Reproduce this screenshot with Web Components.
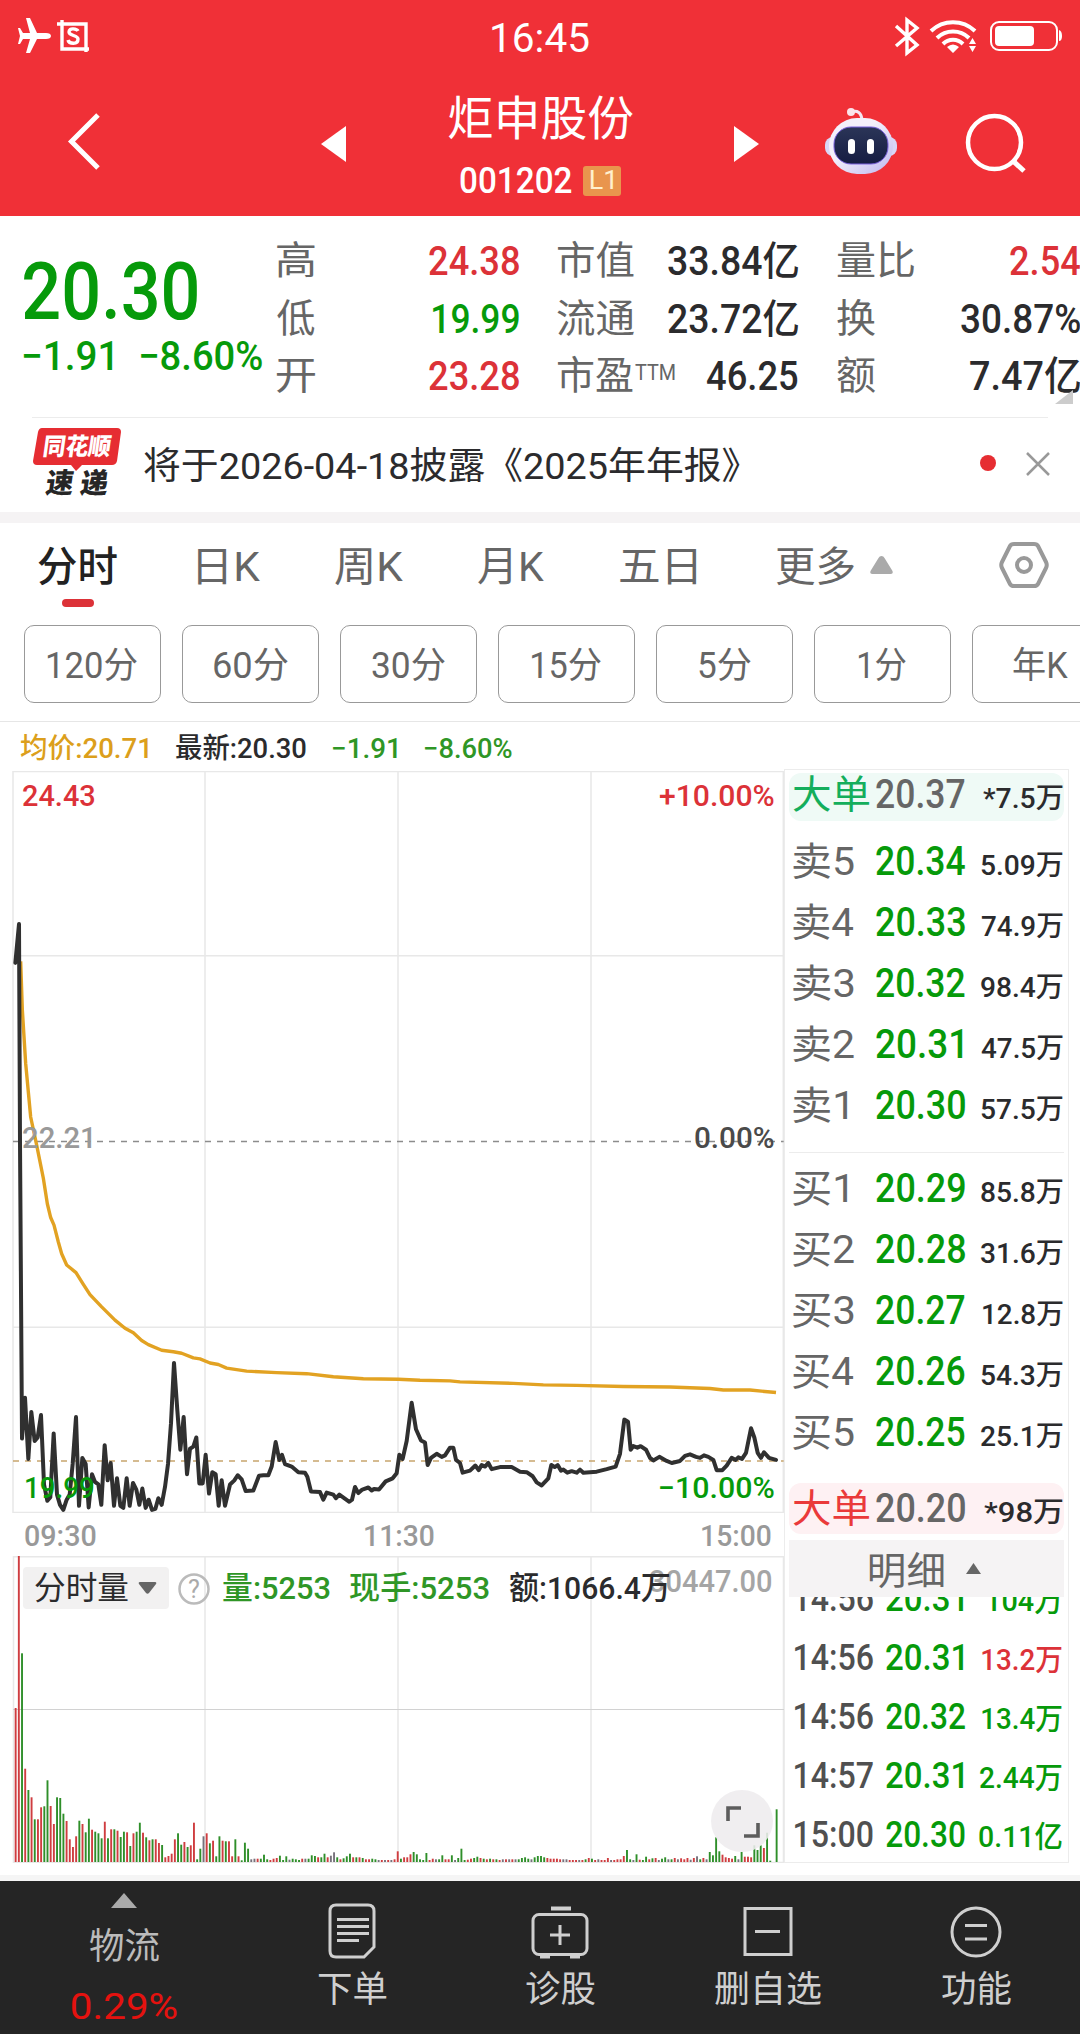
<!DOCTYPE html>
<html lang="zh-CN">
<head>
<meta charset="utf-8">
<title>炬申股份 001202</title>
<style>
  :root {
    --up: #dc3238;
    --down: #069a0a;
    --down-soft: #2f9626;
    --ink: #2b2b2d;
    --muted: #666;
    --pale: #999;
    --line: #ececec;
    --brand: #f03037;
  }
  body {
    margin: 0;
    width: 1080px;
    height: 2034px;
    overflow: hidden;
    background: #fff;
    color: var(--ink);
    font-family: Roboto, "Noto Sans CJK SC", sans-serif;
    display: flex;
    flex-direction: column;
  }
  .band { height: 11px; background: #f5f3f4; flex: none; }
  main { display: flex; height: 1094px; flex: none; }
  .charts { width: 784px; display: flex; flex-direction: column; padding-top: 2px; }
</style>
</head>
<body>
<status-bar></status-bar>
<stock-header></stock-header>
<quote-panel></quote-panel>
<notice-bar><fit-text w="596">将于2026-04-18披露《2025年年报》</fit-text></notice-bar>
<div class="band"></div>
<chart-tabs></chart-tabs>
<period-bar></period-bar>
<chart-legend></chart-legend>
<main>
  <div class="charts">
    <price-chart></price-chart>
    <volume-chart></volume-chart>
  </div>
  <order-book><trade-list></trade-list></order-book>
</main>
<bottom-nav></bottom-nav>

<script>
class BaseElement extends HTMLElement {
  constructor() {
    super();
    this.attachShadow({ mode: 'open' });
  }

  connectedCallback() {
    this.shadowRoot.innerHTML = this.render();
  }
}

// Text whose drawn glyphs span exactly `w` pixels
const ruler = document.createElement('canvas').getContext('2d');

class FitText extends HTMLElement {
  constructor() {
    super();
    this.attachShadow({ mode: 'open' });
    this.shadowRoot.innerHTML = `
      <style>
        :host { display: inline-block; white-space: nowrap; flex: none; }
        span { display: inline-block; transform-origin: 0 50%; }
      </style>
      <span><slot></slot></span>
    `;
  }

  connectedCallback() {
    const width = Number(this.getAttribute('w'));
    const cs = getComputedStyle(this);
    ruler.font = `${cs.fontWeight} ${cs.fontSize} ${cs.fontFamily}`;
    const m = ruler.measureText(this.textContent);
    const scale = width / (m.actualBoundingBoxLeft + m.actualBoundingBoxRight);
    this.style.width = `${width}px`;
    this.shadowRoot.querySelector('span').style.transform =
      `scaleX(${scale.toFixed(4)}) translateX(${m.actualBoundingBoxLeft.toFixed(2)}px)`;
  }
}

class StatusBar extends BaseElement {
  render() {
    return `
      <style>
        :host { display: flex; justify-content: space-between; height: 74px; flex: none;
          background: var(--brand); color: #fff; font-size: 41px; line-height: 76px; }
        svg { display: block; }
        .side { width: 200px; }
      </style>
      <svg class="side" height="74" viewBox="0 0 200 74" fill="none" stroke="#fff">
        <path d="M51 36c0-2-2-3-5-3H37L30 18h-4l4 15h-7l-3-5h-2l2 8-2 8h2l3-5h7l-4 14h4l7-14h9c3 0 5-1 5-3z" fill="#fff" stroke="none"/>
        <path d="M57 24h29v28M62 20v29h27" stroke-width="3.400"/>
        <path d="M78 31c-1-2-9-4-9 1 0 4 9 3 9 7 0 6-9 5-10 1" stroke-width="3.400"/>
      </svg>
      <fit-text w="97">16:45</fit-text>
      <svg class="side" height="74" viewBox="880 0 200 74" fill="none" stroke="#fff">
        <path d="M896 26l21 19-10 8V20l10 8-21 18" stroke-width="3.400"/>
        <path d="M931 31a32 32 0 0 1 44 0M937 38a23 23 0 0 1 32 0M943 44a14 14 0 0 1 20 0" stroke-width="4"/>
        <path d="M947 47q6-5 12 0l-6 6zM969 44l3.500-6 3.500 6zM969 46h7l-3.500 6z" fill="#fff" stroke="none"/>
        <rect x="991" y="22" width="66" height="28" rx="8" stroke-width="2"/>
        <rect x="995" y="26" width="39" height="20" rx="4" fill="#fff" stroke="none"/>
        <path d="M1059 30q3 1 3 6t-3 5z" fill="#fff" stroke="none"/>
      </svg>
    `;
  }
}

class StockHeader extends BaseElement {
  render() {
    return `
      <style>
        :host { display: grid; grid-template-columns: 360px 360px 360px; height: 142px; flex: none;
          background: var(--brand); color: #fff; }
        svg { display: block; }
        .title { display: flex; flex-direction: column; align-items: center; padding-top: 15px; }
        .name { font-size: 47px; line-height: 60px; }
        .code { display: flex; align-items: center; margin-top: 13px; gap: 11px; font-size: 36px;
          font-weight: 500; line-height: 38px; }
        .badge { width: 38px; height: 30px; border-radius: 3px; background: #e9954d; color: #fff0cd;
          font-size: 25px; font-weight: 400; line-height: 30px; display: flex; justify-content: center; }
      </style>
      <svg width="360" height="142" viewBox="0 74 360 142">
        <path d="M98 115L71.500 141.500 98 168" fill="none" stroke="#fff" stroke-width="5"/>
        <path d="M346 126v36l-25-18z" fill="#fff"/>
      </svg>
      <div class="title">
        <fit-text class="name" w="185">炬申股份</fit-text>
        <div class="code"><fit-text w="112">001202</fit-text><span class="badge"><fit-text w="22">L1</fit-text></span></div>
      </div>
      <svg width="360" height="142" viewBox="720 74 360 142">
        <defs>
          <linearGradient id="shell" x1="0" y1="0" x2="1" y2="1">
            <stop offset=".4" stop-color="#f4f0fb"/><stop offset="1" stop-color="#bdb7ee"/>
          </linearGradient>
          <linearGradient id="visor" x1="0" y1="0" x2="0" y2="1">
            <stop offset="0" stop-color="#2b3558"/><stop offset="1" stop-color="#161d42"/>
          </linearGradient>
        </defs>
        <path d="M734 126v36l25-18z" fill="#fff"/>
        <path d="M851 112q10-3 11 8" fill="none" stroke="#f4e6f2" stroke-width="3"/>
        <circle cx="851" cy="112" r="4" fill="#fbe3ea"/>
        <rect x="825" y="137" width="72" height="19" rx="8" fill="#d9d6f6"/>
        <rect x="829" y="118" width="64" height="56" rx="28" fill="url(#shell)"/>
        <rect x="834" y="127" width="54" height="37" rx="17" fill="url(#visor)" stroke="#7b62de" stroke-width="1"/>
        <rect x="848" y="139" width="7" height="15" rx="3.500" fill="#fff"/>
        <rect x="867" y="139" width="7" height="15" rx="3.500" fill="#fff"/>
        <circle cx="994.500" cy="142.500" r="26.500" fill="none" stroke="#fff" stroke-width="4.500"/>
        <path d="M1013 161l11 10" stroke="#fff" stroke-width="5"/>
      </svg>
    `;
  }
}

class QuotePanel extends BaseElement {
  render() {
    const columns = [
      [['高', 38, '24.38', 90, 'up'], ['低', 38, '19.99', 86, 'down'], ['开', 38, '23.28', 90, 'up']],
      [['市值', 77, '33.84亿', 130], ['流通', 77, '23.72亿', 130], ['市盈', 76, '46.25', 91, '', 'TTM']],
      [['量比', 77, '2.54', 70, 'up'], ['换', 38, '30.87%', 119], ['额', 38, '7.47亿', 110]],
    ];
    return `
      <style>
        :host { display: block; height: 201px; flex: none; position: relative; font-size: 39px; }
        .body { display: grid; grid-template-columns: 238px 242px 241px 243px; column-gap: 38.500px; padding-top: 17px; }
        .now { padding: 17px 0 0 24px; color: var(--down); font-weight: 500; }
        .price { display: block; font-size: 79px; line-height: 84px; }
        .change { display: flex; gap: 29px; font-size: 40px; line-height: 46px; }
        .row { display: flex; height: 57.500px; line-height: 57.500px; color: var(--muted); }
        .row b { margin-left: auto; font-weight: 500; color: var(--ink); font-size: 40px; }
        .row b.up { color: var(--up); }
        .row b.down { color: var(--down); }
        sup { font-size: 22px; line-height: 50px; margin-left: 2px; vertical-align: top; height: 50px; }
        .corner { position: absolute; right: 7px; bottom: 13px; border: solid transparent;
          border-width: 0 0 14px 18px; border-bottom-color: #ccc; }
        hr { position: absolute; left: 32px; right: 32px; bottom: -1px; margin: 0; border: 0;
          height: 1px; background: var(--line); }
      </style>
      <div class="body">
        <div class="now">
          <fit-text class="price" w="173">20.30</fit-text>
          <div class="change"><fit-text w="88">−1.91</fit-text><fit-text w="121">−8.60%</fit-text></div>
        </div>
        ${columns.map(rows => `<div>${rows.map(([label, lw, value, vw, tone = '', sup]) => `
          <div class="row"><fit-text w="${lw}">${label}</fit-text>${sup ? `<sup><fit-text w="40">${sup}</fit-text></sup>` : ''}
          <b class="${tone}"><fit-text w="${vw}">${value}</fit-text></b></div>`).join('')}</div>`).join('')}
      </div>
      <i class="corner"></i>
      <hr>
    `;
  }
}

class NoticeBar extends BaseElement {
  render() {
    return `
      <style>
        :host { display: flex; height: 95px; flex: none; font-size: 37px; line-height: 99px; }
        .logo { width: 88px; margin: 11px 23px 0 33px; height: 76px; position: relative; }
        .logo svg { position: absolute; left: 0; top: 0; }
        .logo div { position: relative; font-weight: 900; transform: skewX(-8deg); display: flex; justify-content: center; }
        .brand { color: #fff; font-size: 24px; line-height: 39px; }
        .sub { color: #262626; font-size: 28px; line-height: 34px; }
        .icons { margin-left: auto; }
      </style>
      <div class="logo">
        <svg width="88" height="44" viewBox="0 0 88 44"><path d="M9 0h75q4 0 4 4l-4 29q-1 4-5 4H49l-6 6-5-6H4q-4 0-4-4L5 4q1-4 4-4z" fill="#e62d32"/></svg>
        <div class="brand"><fit-text w="67">同花顺</fit-text></div>
        <div class="sub"><fit-text w="62">速 递</fit-text></div>
      </div>
      <slot></slot>
      <svg class="icons" width="110" height="94" viewBox="970 418 110 94">
        <circle cx="988" cy="464" r="8" fill="#e62d32"/>
        <path d="M1027 454l22 22M1049 454l-22 22" stroke="#999" stroke-width="2.500"/>
      </svg>
    `;
  }
}

class ChartTabs extends BaseElement {
  render() {
    const tabs = [['日K', 62, 81], ['周K', 68, 75], ['月K', 66, 75], ['五日', 77, 76], ['更多', 78, 79]];
    return `
      <style>
        :host { display: flex; height: 102px; flex: none; box-sizing: border-box; padding-left: 38px;
          font-size: 41px; line-height: 88px; color: var(--muted); }
        .active { color: #222; font-weight: 500; position: relative; }
        .active::after { content: ''; position: absolute; left: 24px; top: 76px; width: 32px; height: 8px;
          border-radius: 4px; background: var(--up); }
      </style>
      <div class="active"><fit-text w="79">分时</fit-text></div>
      ${tabs.map(([t, w, gap]) => `<fit-text w="${w}" style="margin-left:${gap}px">${t}</fit-text>`).join('')}
      <svg width="226" height="102" viewBox="854 523 226 102">
        <path d="M881.500 556q2 0 3 2l8 13q1 3-2 3h-18q-3 0-2-3l8-13q1-2 3-2z" fill="#aaa"/>
        <path d="M1014 544h20q3 0 4 2l8 16q1.500 3 0 6l-8 16q-1 2-4 2h-20q-3 0-4-2l-8-16q-1.500-3 0-6l8-16q1-2 4-2z" fill="none" stroke="#999" stroke-width="4"/>
        <circle cx="1024" cy="565" r="7" fill="none" stroke="#999" stroke-width="4"/>
      </svg>
    `;
  }
}

class PeriodBar extends BaseElement {
  render() {
    const periods = [['120分', 89], ['60分', 74], ['30分', 73], ['15分', 69], ['5分', 52], ['1分', 47], ['年K', 55]];
    return `
      <style>
        :host { display: flex; gap: 21px; height: 97px; flex: none; box-sizing: border-box; padding-left: 24px;
          overflow: hidden; border-bottom: 1px solid #e6e6e6; font-size: 36px; color: var(--muted); }
        div { width: 137px; height: 78px; box-sizing: border-box; flex: none; border: 1px solid #999;
          border-radius: 10px; display: flex; justify-content: center; line-height: 80px; }
      </style>
      ${periods.map(([t, w]) => `<div><fit-text w="${w}">${t}</fit-text></div>`).join('')}
    `;
  }
}

class ChartLegend extends BaseElement {
  render() {
    return `
      <style>
        :host { display: flex; height: 47px; flex: none; padding-left: 20px; font-size: 28px;
          line-height: 53px; font-weight: 500; }
        .avg { color: #dc9f1c; }
        .last { margin: 0 27px 0 28px; }
        .chg { color: var(--down-soft); margin-right: 28px; }
      </style>
      <fit-text class="avg" w="128">均价:20.71</fit-text>
      <fit-text class="last" w="130">最新:20.30</fit-text>
      <fit-text class="chg" w="64">−1.91</fit-text>
      <fit-text class="chg" w="87">−8.60%</fit-text>
    `;
  }
}

// Minute series, x in thirds of a pixel, y in the plot's own units
const PRICE = `46,398 57,322 60,750 66,1330 75,1250 85,1370 94,1278 104,1335 113,1328 123,1284 132,1420 142,1452
  151,1445 161,1320 171,1440 180,1460 190,1470 200,1450 209,1440 218,1380 228,1288 237,1462 247,1368 257,1380
  266,1465 276,1400 285,1415 295,1420 304,1460 314,1343 323,1412 332,1378 342,1462 351,1408 361,1462 370,1466
  380,1408 389,1462 399,1417 409,1430 418,1460 427,1428 437,1466 446,1450 456,1470 466,1468 475,1447 485,1460
  495,1425 504,1380 513,1300 522,1182 532,1275 541,1352 551,1288 561,1400 570,1350 580,1346 589,1328 598,1418
  608,1418 617,1362 627,1438 637,1396 647,1400 656,1462 665,1412 675,1462 690,1420 703,1412 713,1402 725,1410
  737,1433 760,1432 777,1403 790,1402 805,1402 815,1385 827,1337 838,1372 846,1362 855,1380 875,1385 895,1396
  915,1397 922,1405 933,1434 960,1435 970,1450 980,1436 1000,1440 1008,1447 1018,1440 1048,1454 1056,1450
  1065,1425 1075,1437 1087,1430 1105,1426 1115,1432 1122,1429 1137,1430 1157,1414 1178,1408 1190,1398 1198,1362
  1208,1370 1220,1335 1235,1260 1248,1312 1263,1334 1275,1338 1283,1382 1293,1368 1310,1360 1325,1366 1335,1363
  1350,1348 1360,1348 1368,1372 1380,1378 1388,1397 1410,1393 1426,1383 1436,1392 1445,1382 1455,1385 1465,1378
  1475,1390 1500,1386 1535,1386 1560,1395 1580,1396 1598,1404 1610,1416 1625,1422 1645,1408 1654,1382 1664,1386
  1673,1382 1683,1393 1690,1391 1702,1397 1715,1394 1730,1397 1740,1391 1750,1397 1790,1395 1820,1390 1847,1385
  1860,1360 1873,1293 1884,1297 1892,1352 1900,1345 1912,1348 1922,1345 1938,1352 1950,1368 1960,1373 1978,1366
  2000,1374 2015,1378 2040,1374 2055,1364 2070,1361 2088,1366 2100,1368 2112,1363 2125,1366 2140,1372 2150,1392
  2167,1392 2180,1383 2195,1368 2207,1372 2215,1367 2226,1370 2238,1358 2253,1310 2263,1328 2273,1358 2283,1368
  2292,1357 2307,1368 2328,1372`;
const AVERAGE = `62,395 67,490 77,595 92,700 110,755 130,820 142,870 152,897 162,912 175,945 185,968 200,990 213,997
  228,1005 250,1028 270,1048 305,1072 345,1098 375,1114 400,1123 425,1138 445,1146 485,1157 520,1160 545,1163
  580,1172 600,1174 630,1182 655,1185 680,1192 740,1198 830,1201 920,1203 1000,1209 1090,1213 1195,1214
  1260,1216 1350,1217 1380,1219 1540,1222 1630,1225 1730,1226 1870,1228 2010,1229 2130,1232 2170,1235 2250,1235
  2328,1240`;

class PriceChart extends BaseElement {
  render() {
    return `
      <style>
        :host { display: block; height: 785px; position: relative; font-size: 29.500px; font-weight: 500; line-height: 30px; }
        svg { display: block; }
        .series * { vector-effect: non-scaling-stroke; }
        .axis { display: flex; justify-content: space-between; padding: 8px 13px 0 25px; color: var(--pale); line-height: 30px; }
        .tag { position: absolute; left: 23px; }
        .tag.r { left: auto; right: 10px; }
        .top { top: 10px; color: var(--up); }
        .mid { top: 352px; color: var(--pale); }
        .mid.r { color: #4a4a4a; }
        .low { top: 702px; color: var(--down); }
      </style>
      <svg class="series" width="784" height="742" viewBox="0 22 2352 1454" preserveAspectRatio="none" fill="none">
        <path d="M39 23H2351M39 384H2351M39 1112H2351M39 1475H2351M39 22V1476M615 22V1476M1194 22V1476M1773 22V1476M2350 22V1476" stroke="#e8e8e8" stroke-width="1.500"/>
        <path d="M39 748H2351" stroke="#8c8c8c" stroke-width="1.500" stroke-dasharray="6 6"/>
        <path d="M39 1374H2351" stroke="#c8a56e" stroke-width="1.500" stroke-dasharray="6 6"/>
        <polyline points="${AVERAGE}" stroke="#e2a222" stroke-width="3.400" stroke-linejoin="round"/>
        <polyline points="${PRICE}" stroke="#303030" stroke-width="4" stroke-linejoin="round" stroke-linecap="round"/>
        <path d="M43 398L55 322H60V398z" fill="#303030"/>
      </svg>
      <div class="axis"><fit-text w="71">09:30</fit-text><fit-text w="69">11:30</fit-text><fit-text w="69">15:00</fit-text></div>
      <fit-text class="tag top" w="72">24.43</fit-text>
      <fit-text class="tag top r" w="115">+10.00%</fit-text>
      <fit-text class="tag mid" w="69">22.21</fit-text>
      <fit-text class="tag mid r" w="79">0.00%</fit-text>
      <fit-text class="tag low" w="68" style="left:26px">19.99</fit-text>
      <fit-text class="tag low r" w="114">−10.00%</fit-text>
    `;
  }
}

// One bar per minute: colour letter (r rise, g fall, k flat) and height
const VOLUME = `r462 r920 g626 r280 g216 r194 g128 r128 r164 g167 g245 r168 r114 g194 g192 g145 r123 r68 r45 r77
  g124 r114 g89 g130 r97 g91 g86 g71 r121 g71 r98 g98 r94 g75 g91 r89 g48 r86 g91 g118
  r88 g74 r65 g68 r68 r57 g51 r14 r18 r25 r68 g86 g52 r60 g45 r50 r118 g8 g40 k77
  r86 g56 r64 g17 g77 r64 g62 r62 r17 g68 r17 g5 g58 g40 k8 k10 r10 g10 g22 g8
  r6 r10 r12 g19 g6 g17 k7 g10 g8 g6 r10 k10 g10 g20 g18 r14 g14 g25 r14 k19
  k29 g14 r8 g11 g17 g25 r14 g14 r14 g12 r8 r8 g10 g8 k6 r6 k6 r6 k6 r8
  r32 g10 r14 r14 r23 g30 g23 g8 g6 g27 r6 r10 k8 g8 g20 r8 r8 g20 k6 g12
  g40 g6 r7 r10 g12 g16 r12 g10 r8 g10 r8 g8 r6 k8 r8 k8 r8 k8 g8 g12
  g14 g10 k8 g14 g18 g18 g14 r12 r10 r10 r10 r8 k8 k8 r6 r6 r6 k6 r6 g8
  r12 g10 r6 k8 r6 r6 r12 k6 r6 r8 r8 r18 g36 g8 k6 g23 r7 g6 g16 r8
  g11 r12 k6 g10 g14 k8 g8 r12 k8 r11 r8 r12 k7 r12 k17 g8 r12 k8 g30 g20
  g74 g32 r22 r14 r12 r10 g18 k8 g30 r16 r16 r14 g50 g36 g50 r42 g88 g4 g0 g158`;

class VolumeChart extends BaseElement {
  render() {
    const colors = { r: '#cf3d40', g: '#2f8f2a', k: '#77727c' };
    const bars = VOLUME.trim().split(/\s+/).map((bar, i) => {
      const h = Number(bar.slice(1)) / 3;
      return `<rect x="${(14.700 + i * 3.184).toFixed(2)}" y="${(306 - h).toFixed(1)}" width="1.900" height="${h.toFixed(1)}" fill="${colors[bar[0]]}"/>`;
    }).join('');
    return `
      <style>
        :host { display: grid; height: 307px; position: relative; font-size: 32px; }
        svg { display: block; }
        .plot, .head { grid-area: 1 / 1; }
        .head { display: flex; padding: 11px 0 0 23px; line-height: 42px; height: 42px; font-weight: 500; color: var(--down-soft); }
        .select { width: 146px; height: 42px; box-sizing: border-box; padding: 0 12px; border-radius: 4px; line-height: 45px;
          background: #f2f1f1; color: var(--ink); font-weight: 400; display: flex; align-items: center; justify-content: space-between; }
        .help { margin: 6px 13px 0 9px; }
        .q { font-size: 25px; }
        .max { position: absolute; right: 12px; top: 6px; font-size: 31px; line-height: 40px; font-weight: 500; color: #a5a5a5; }
        .expand { position: absolute; left: 711px; top: 234px; }
      </style>
      <svg class="plot" width="784" height="307" fill="none">
        <path d="M13 .7H784M13 306.500H784M13.500 0V307M205 0V307M398 0V307M591 0V307M783.500 0V307" stroke="#e8e8e8" stroke-width="1.500"/>
        <path d="M13 153.500H784" stroke="#d2d2d2"/>
        ${bars}
      </svg>
      <fit-text class="max" w="122">30447.00</fit-text>
      <div class="head">
        <div class="select"><fit-text w="93">分时量</fit-text>
          <svg width="19" height="12"><path d="M2 0h15q2 0 1 2l-7 9q-1.500 1.500-3 0L1 2Q0 0 2 0z" fill="#666"/></svg></div>
        <svg class="help" width="32" height="32" viewBox="0 0 32 32"><circle cx="16" cy="16" r="14.500" fill="none" stroke="#bbb" stroke-width="2.500"/><text class="q" x="16" y="25" text-anchor="middle" font-weight="400" fill="#aaa">?</text></svg>
        <fit-text w="107">量:5253</fit-text>
        <fit-text w="139" style="margin:0 20px">现手:5253</fit-text>
        <fit-text w="161" style="color:var(--ink)">额:1066.4万</fit-text>
      </div>
      <svg class="expand" width="62" height="62" viewBox="0 0 62 62"><circle cx="31" cy="31" r="31" fill="#eeecee" opacity=".88"/><path d="M30 18H17V31M47 33V46H33" fill="none" stroke="#5d5d5d" stroke-width="3.600"/></svg>
    `;
  }
}

class OrderBook extends BaseElement {
  row(label, lw, price, vol, vw, cls = '') {
    return `<div class="row ${cls}"><fit-text class="label" w="${lw}">${label}</fit-text>
      <fit-text class="price" w="${price.endsWith('1') ? 86 : 89}">${price}</fit-text>
      <fit-text class="vol" w="${vw}">${vol}</fit-text></div>`;
  }

  render() {
    const asks = [['5', '20.34', '5.09万'], ['4', '20.33', '74.9万'], ['3', '20.32', '98.4万'], ['2', '20.31', '47.5万'], ['1', '20.30', '57.5万']];
    const bids = [['1', '20.29', '85.8万'], ['2', '20.28', '31.6万'], ['3', '20.27', '12.8万'], ['4', '20.26', '54.3万'], ['5', '20.25', '25.1万']];
    const list = (side, rows) => rows.map(([n, p, v]) =>
      this.row(side + n, n === '1' ? 54 : 61, p, v, v === '12.8万' ? 80 : 82)).join('');
    return `
      <style>
        :host { display: flex; flex-direction: column; width: 285px; height: 1094px; box-sizing: border-box;
          border: 1px solid var(--line); padding: 3px 4px 0; }
        .row { display: grid; grid-template-columns: 83px 89px 1fr; align-items: baseline; height: 61px;
          line-height: 62px; padding: 0 1px 0 4px; flex: none; }
        .label { color: var(--muted); font-size: 39px; }
        .price { color: var(--down); font-size: 40px; font-weight: 500; }
        .vol { justify-self: end; font-size: 28px; font-weight: 500; }
        .big { border-radius: 12px; }
        .big .price { color: var(--muted); }
        .sell { height: 48px; line-height: 44px; background: #effaf6; margin-bottom: 10px; }
        .sell .label { color: #14ae5c; }
        .buy { height: 51px; line-height: 51px; background: #fef1f3; margin: 20px 0 6px; }
        .buy .label { color: #ea3a3a; }
        hr { width: 100%; height: 1px; border: 0; background: var(--line); margin: 16px 0 5px; flex: none; }
        .more { height: 57px; flex: none; background: #f5f3f4; display: flex; align-items: center;
          gap: 22px; padding-left: 81px; font-size: 38px; color: var(--muted); }
        .more fit-text { line-height: 57px; padding-top: 5px; }
      </style>
      ${this.row('大单', 76, '20.37', '*7.5万', 80, 'big sell')}
      ${list('卖', asks)}
      <hr>
      ${list('买', bids)}
      ${this.row('大单', 76, '20.20', '*98万', 79, 'big buy')}
      <div class="more"><fit-text w="74">明细</fit-text><svg width="15" height="11"><path d="M7.500 0L15 11H0z" fill="#666"/></svg></div>
      <slot></slot>
    `;
  }
}

class TradeList extends BaseElement {
  render() {
    const trades = [
      ['14:56', '20.31', 77, '104万', 75, 'down'],
      ['14:56', '20.31', 77, '13.2万', 80, 'up'],
      ['14:56', '20.32', 79, '13.4万', 80, 'down'],
      ['14:57', '20.31', 77, '2.44万', 82, 'down'],
      ['15:00', '20.30', 79, '0.11亿', 83, 'down'],
    ];
    return `
      <style>
        :host { display: block; overflow: hidden; flex: 1; min-height: 0; font-weight: 500; }
        .row { display: grid; grid-template-columns: 91px 80px 1fr; align-items: baseline; height: 59px;
          line-height: 60px; padding: 0 2px 0 6px; font-size: 37px; }
        .row:first-of-type { margin-top: -28px; }
        .time { color: #505050; }
        .price { color: var(--down); }
        .vol { justify-self: end; font-size: 30px; }
        .up { color: var(--up); }
        .down { color: var(--down); }
      </style>
      ${trades.map(([t, p, pw, v, vw, tone]) => `<div class="row"><fit-text class="time" w="78">${t}</fit-text>
        <fit-text class="price" w="${pw}">${p}</fit-text><fit-text class="vol ${tone}" w="${vw}">${v}</fit-text></div>`).join('')}
    `;
  }
}

class BottomNav extends BaseElement {
  render() {
    const items = [
      ['下单', 69, '<path d="M9 2h32q6 0 6 6v36l-10 10H9q-6 0-6-6V8q0-6 6-6z"/><path d="M10 16.500h32M10 23.500h32M10 30.500h32M10 37.500h22"/>'],
      ['诊股', 69, '<path d="M16 5.500h20" stroke-width="4"/><rect x="-2" y="11.500" width="54" height="40" rx="6"/><path d="M25 22v20M15 32h20M5 54h10M35 54h10"/>'],
      ['删自选', 106, '<rect x="2" y="5.500" width="46" height="46"/><path d="M12 28.500h25"/>'],
      ['功能', 69, '<circle cx="25" cy="29" r="24"/><path d="M14 22.500h22M14 36h22"/>'],
    ];
    return `
      <style>
        :host { display: grid; grid-template-columns: 248px repeat(4, 208px); height: 153px; flex: none; margin-top: 18px;
          box-shadow: 0 -6px #f5f5f5; background: #252525; color: #cfcfcf; font-size: 36px; }
        div { display: flex; flex-direction: column; align-items: center; }
        svg { display: block; overflow: visible; }
        .item { padding-top: 22px; gap: 6px; line-height: 51px; }
        .sector { padding-top: 12px; color: #bbb; line-height: 40px; }
        .sector fit-text { margin-top: 19px; }
        .sector .pct { color: #e5120f; font-size: 37px; margin-top: 20px; }
      </style>
      <div class="sector">
        <svg width="26" height="15"><path d="M13 0l13 15H0z" fill="#aaa"/></svg>
        <fit-text w="69">物流</fit-text>
        <fit-text class="pct" w="105">0.29%</fit-text>
      </div>
      ${items.map(([t, w, icon]) => `<div class="item"><svg width="50" height="56" fill="none" stroke="#cfcfcf" stroke-width="3">${icon}</svg>
        <fit-text w="${w}">${t}</fit-text></div>`).join('')}
    `;
  }
}

customElements.define('status-bar', StatusBar);
customElements.define('stock-header', StockHeader);
customElements.define('quote-panel', QuotePanel);
customElements.define('notice-bar', NoticeBar);
customElements.define('chart-tabs', ChartTabs);
customElements.define('period-bar', PeriodBar);
customElements.define('chart-legend', ChartLegend);
customElements.define('price-chart', PriceChart);
customElements.define('volume-chart', VolumeChart);
customElements.define('order-book', OrderBook);
customElements.define('trade-list', TradeList);
customElements.define('bottom-nav', BottomNav);
// last, so that every text is measured with the font its parent gives it
customElements.define('fit-text', FitText);
</script>
</body>
</html>
